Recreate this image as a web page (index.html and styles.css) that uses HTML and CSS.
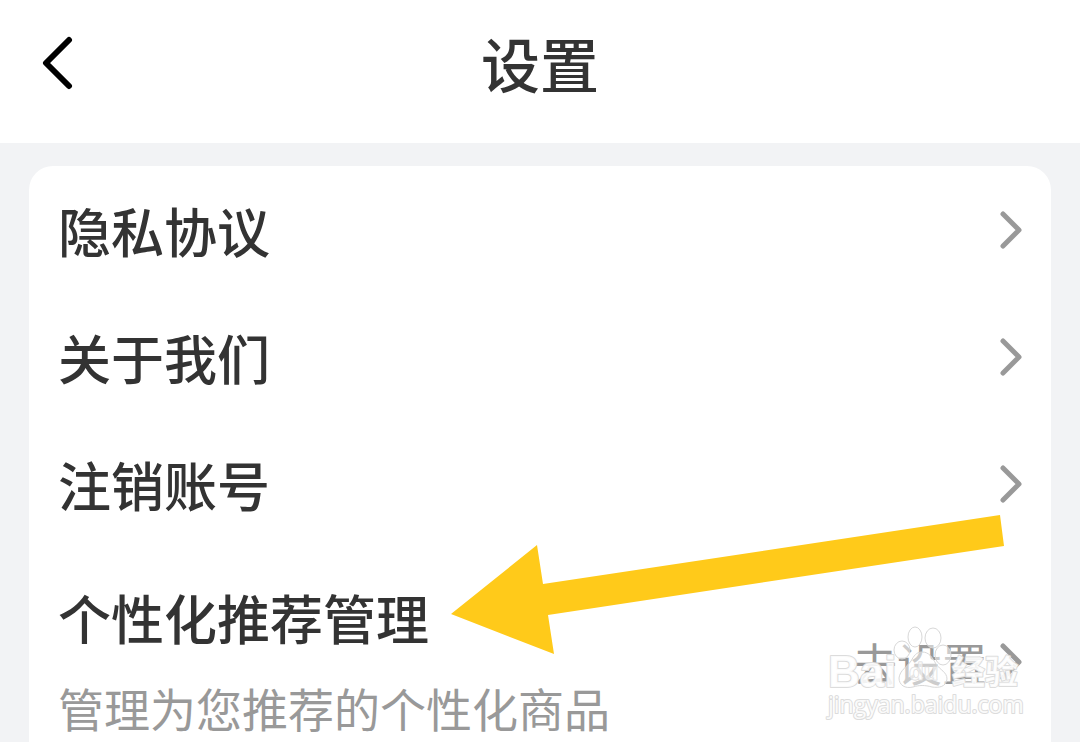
FILE: index.html
```html
<!DOCTYPE html>
<html lang="zh-CN">
<head>
    <meta charset="UTF-8">
    <meta name="viewport" content="width=device-width, initial-scale=1.0">
    <title>设置</title>
    <link rel="stylesheet" href="styles.css">
</head>
<body>
    <!-- Header -->
    <header class="top-bar">
        <button class="back-btn" type="button" aria-label="返回">
            <svg width="36" height="54" viewBox="0 0 36 54">
                <path d="M29 4 L6 27 L29 50" fill="none" stroke="#000" stroke-width="6" stroke-linecap="round" stroke-linejoin="round"/>
            </svg>
        </button>
        <h1>设置</h1>
    </header>

    <!-- Settings list -->
    <main class="settings">
        <nav class="card">
            <a class="row" href="#privacy">
                <span class="row-title">隐私协议</span>
                <svg class="chevron" viewBox="0 0 24 40"><path d="M4 4 L20 20 L4 36"/></svg>
            </a>
            <a class="row" href="#about">
                <span class="row-title">关于我们</span>
                <svg class="chevron" viewBox="0 0 24 40"><path d="M4 4 L20 20 L4 36"/></svg>
            </a>
            <a class="row" href="#cancel">
                <span class="row-title">注销账号</span>
                <svg class="chevron" viewBox="0 0 24 40"><path d="M4 4 L20 20 L4 36"/></svg>
            </a>
            <a class="row row-tall" href="#recommend">
                <span class="row-text">
                    <span class="row-title">个性化推荐管理</span>
                    <span class="row-desc">管理为您推荐的个性化商品</span>
                </span>
                <span class="row-value">去设置</span>
                <svg class="chevron" viewBox="0 0 24 40"><path d="M4 4 L20 20 L4 36"/></svg>
            </a>
        </nav>

        <!-- Pointer arrow -->
        <svg class="arrow" width="554" height="140" viewBox="0 0 554 140">
            <polygon points="1,99 87,30 93,69 550,0 554,31 98,100 104,139" fill="#ffca1a"/>
        </svg>

        <!-- Watermark -->
        <svg class="watermark" width="200" height="100" viewBox="0 0 200 100">
            <text class="mark-bold" x="3" y="63" font-size="44">Bai</text>
            <ellipse cx="77" cy="26" rx="8" ry="9"/>
            <ellipse cx="90" cy="13" rx="7" ry="10"/>
            <ellipse cx="108" cy="14" rx="8" ry="10"/>
            <ellipse cx="118" cy="31" rx="8" ry="10"/>
            <path d="M97 28 C104 28 107 33 111 40 C115 46 122 48 122 55 C121 63 114 64 107 63 C100 61 94 61 88 63 C80 65 74 61 74 54 C75 46 82 43 86 37 C89 32 91 28 97 28 Z"/>
            <text class="mark-bold mark-du" x="84" y="56" font-size="24">du</text>
            <text class="mark-cjk" x="127" y="60" font-size="33">经验</text>
            <text class="mark-url" x="3" y="89" font-size="23">jingyan.baidu.com</text>
        </svg>
    </main>
</body>
</html>
```

FILE: styles.css
```css
* {
    box-sizing: border-box;
}

body {
    margin: 0;
    height: 100vh;
    overflow: hidden;
    background: #f2f3f5;
    color: #333;
    font-family: "Noto Sans CJK SC", sans-serif;
    font-weight: 500;
}

/* Header */
.top-bar {
    display: grid;
    grid-template-columns: 100px 1fr 100px;
    align-items: center;
    height: 143px;
    padding-bottom: 18px;
    background: #fff;
}

.back-btn {
    display: flex;
    width: 80px;
    padding: 0 0 0 40px;
    border: none;
    background: none;
    cursor: pointer;
}

h1 {
    margin: 0;
    font-size: 59px;
    font-weight: 500;
    line-height: 80px;
    text-align: center;
}

/* Settings list */
.settings {
    position: relative;
    padding: 23px 29px;
}

.card {
    border-radius: 24px;
    background: #fff;
}

.row {
    display: flex;
    align-items: center;
    min-height: 127px;
    padding: 0 28px 0 29px;
    color: inherit;
    text-decoration: none;
}

.row-tall {
    min-height: 230px;
}

.row-text {
    display: flex;
    flex-direction: column;
    gap: 14px;
}

.row-title {
    font-size: 53px;
    line-height: 76px;
}

.row-desc {
    color: #999;
    font-size: 46px;
    font-weight: 400;
    line-height: 76px;
}

.row-value {
    margin-left: auto;
    padding-right: 12px;
    color: #999;
    font-size: 45px;
    font-weight: 400;
}

.chevron {
    width: 24px;
    height: 40px;
    margin-left: auto;
    fill: none;
    stroke: #999;
    stroke-width: 5;
    stroke-linecap: round;
    stroke-linejoin: round;
}

.row-value + .chevron {
    margin-left: 0;
}

/* Pointer arrow and watermark lie over the list */
.arrow {
    position: absolute;
    top: 372px;
    left: 450px;
    pointer-events: none;
}

.watermark {
    position: absolute;
    top: 481px;
    right: 55px;
    fill: rgba(255, 255, 255, 0.5);
    stroke: #d8d8d8;
    stroke-width: 1;
    pointer-events: none;
}

.watermark text {
    fill: #fff;
    fill-opacity: 0.9;
    stroke: #dcdcdc;
    stroke-width: 2;
    stroke-linejoin: round;
    paint-order: stroke;
}

.watermark .mark-du {
    fill-opacity: 0.5;
    stroke-width: 1;
}

.mark-bold {
    font-family: "Liberation Sans", sans-serif;
    font-weight: 700;
}

.mark-cjk {
    font-family: "Noto Sans CJK SC", sans-serif;
    font-weight: 700;
}

.mark-url {
    font-family: "Open Sans", sans-serif;
    font-weight: 400;
}
```
